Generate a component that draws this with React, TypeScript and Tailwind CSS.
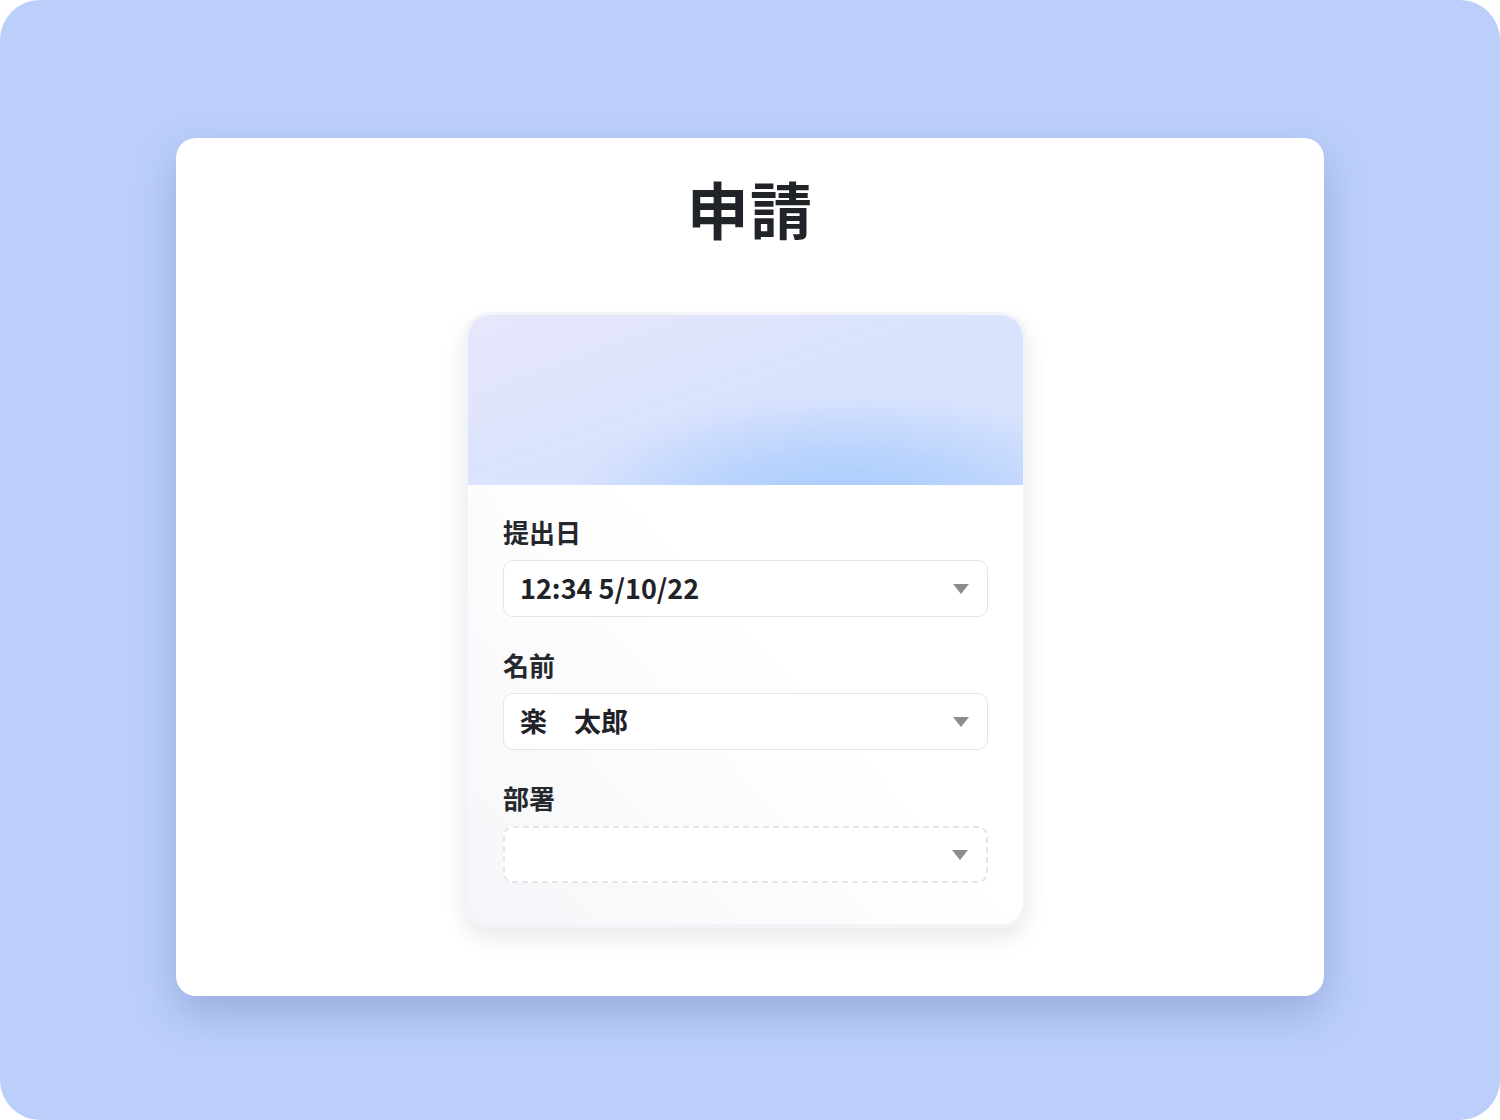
const jp = { fontFamily: '"Noto Sans CJK JP", "Noto Sans", sans-serif' };

function Caret() {
  return (
    <svg width="16" height="10" viewBox="0 0 16 10" className="shrink-0">
      <path d="M0 0 H16 L8 10 Z" fill="#8c8c8c" />
    </svg>
  );
}

function Field({ label, value, dashed }: { label: string; value?: string; dashed?: boolean }) {
  return (
    <div className="flex flex-col">
      <div className="text-[26px] leading-[30px] font-bold text-[#24272c]">{label}</div>
      <div
        className={
          "mt-[13px] h-[57px] rounded-[10px] flex items-center justify-between pl-[16px] pr-[18px] bg-white " +
          (dashed ? "border-2 border-dashed border-[#e4e6ea]" : "border-[1.5px] border-solid border-[#e3e5e9]")
        }
      >
        <span className="text-[27px] font-bold text-[#1f2227] whitespace-pre">{value ?? ""}</span>
        <Caret />
      </div>
    </div>
  );
}

export default function App() {
  return (
    <div className="w-[1500px] h-[1120px] bg-white" style={jp}>
      <div className="w-full h-full rounded-[40px] bg-[#bccffa] flex flex-col items-center pt-[138px]">
        <div className="w-[1148px] h-[858px] bg-white rounded-[20px] shadow-[0_18px_40px_rgba(90,110,170,0.35)] flex flex-col items-center">
          <h1 className="mt-[177px] -translate-y-[138px] text-[62px] leading-none font-bold text-[#202328] tracking-[0.02em]">
            申請
          </h1>
          <div className="-mt-[134px] pt-[69px] mr-[9px]">
            <div className="w-[563px] rounded-[26px] border-[4px] border-t-[3px] border-[#f3f4f7] bg-gradient-to-tr from-[#f5f6f9] via-white to-white shadow-[0_10px_22px_rgba(0,0,0,0.09)] overflow-hidden">
              <div className="h-[170px] rounded-t-[22px] bg-[radial-gradient(ellipse_65%_85%_at_68%_112%,#a6cafd_0%,rgba(176,206,253,0.7)_40%,rgba(214,226,253,0)_78%),linear-gradient(160deg,#e7e7fb_0%,#dbe3fd_45%,#d5e2fd_100%)]" />
              <div className="px-[35px] pt-[32px] pb-[41px] flex flex-col gap-[33px]">
                <Field label="提出日" value="12:34 5/10/22" />
                <Field label="名前" value="楽　太郎" />
                <Field label="部署" dashed />
              </div>
            </div>
          </div>
        </div>
      </div>
    </div>
  );
}
